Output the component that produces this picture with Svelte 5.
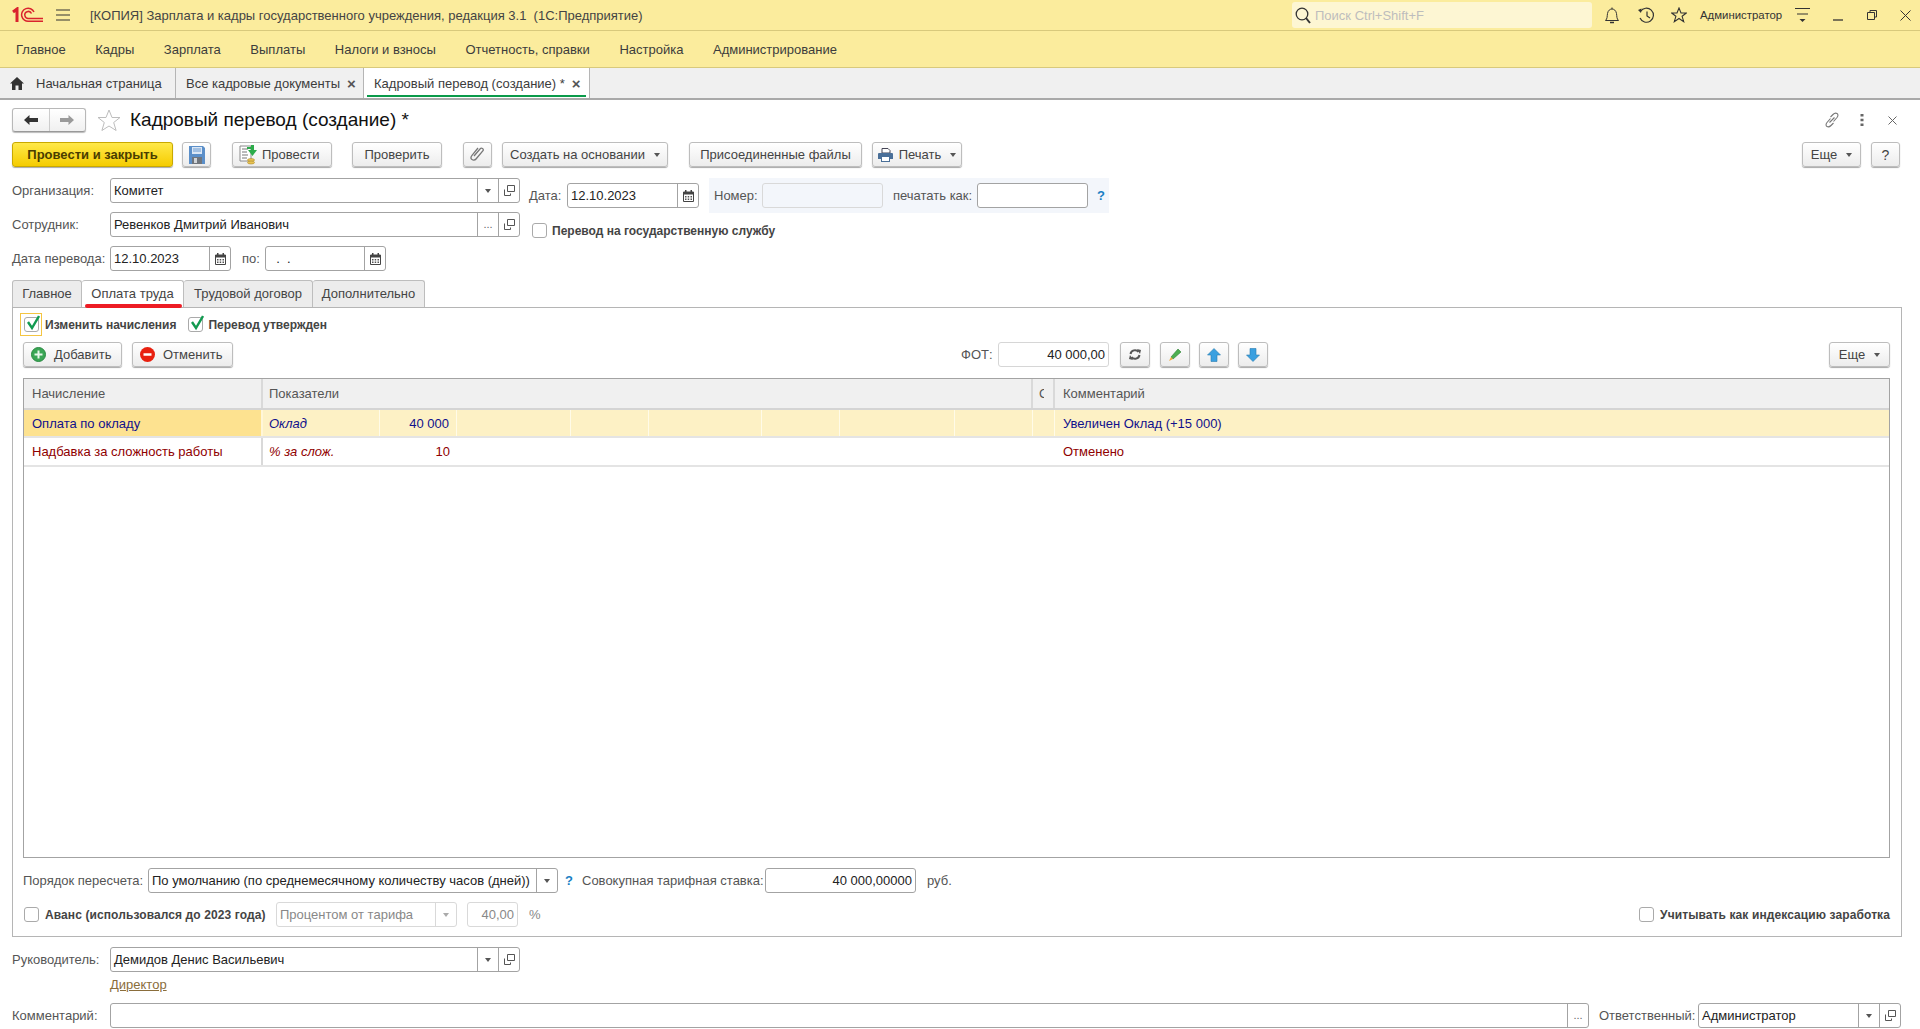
<script>
  const menu = ["Главное", "Кадры", "Зарплата", "Выплаты", "Налоги и взносы", "Отчетность, справки", "Настройка", "Администрирование"];
  const cells = [114, 78, 113, 78, 115, 78, 22];
</script>

{#snippet openIcon()}
  <svg width="11" height="11" viewBox="0 0 11 11" fill="none" stroke="#555"><path d="M3.5 .5h7v6h-7zM.5 4.5v6h6v-2" /></svg>
{/snippet}
{#snippet calIcon()}
  <svg width="11" height="12" viewBox="0 0 11 12"><path d="M.5 2h10v9.5H.5z" fill="#fff" stroke="#444" /><path d="M.5 2h10v2.5H.5zM2 0h1.500v2H2zM7.500 0H9v2H7.500z" fill="#444" /><path d="M2 6h1.500v1.500H2zM4.700 6h1.500v1.500H4.700zM7.500 6H9v1.500H7.500zM2 8.500h1.500V10H2zM4.700 8.500h1.500V10H4.700zM7.500 8.500H9V10H7.500z" fill="#555" /></svg>
{/snippet}
{#snippet tri()}
  <i class="tri"></i>
{/snippet}
{#snippet check(on)}
  <span class="cb">
    {#if on}
      <svg class="tick" width="16" height="18" viewBox="0 0 16 18" fill="none"><path d="M4 9l4 6 7-12" stroke="#129a50" stroke-width="2.400" /></svg>
    {/if}
  </span>
{/snippet}

<div class="app">
  <header class="titlebar">
    <svg class="logo" width="32" height="16" viewBox="0 0 32 16" fill="none" stroke="#d9232e">
      <path d="M1 5l4-3v13" stroke-width="3" />
      <path d="M22 5A6.500 6.500 0 1 0 17 14.200H31" stroke-width="1.500" />
      <path d="M19.500 6.500A3.500 3.500 0 1 0 17 11.400H31" stroke-width="1.500" />
    </svg>
    <svg class="burger" width="14" height="12" viewBox="0 0 14 12" stroke="#333"><path d="M0 1h14M0 6h14M0 11h14" /></svg>
    <div class="apptitle">[КОПИЯ] Зарплата и кадры государственного учреждения, редакция 3.1&nbsp; (1С:Предприятие)</div>
    <div class="search">
      <svg width="16" height="17" viewBox="0 0 16 17" fill="none" stroke="#333"><circle cx="7" cy="7" r="5.800" stroke-width="1.300" /><path d="M11 11l4 5" stroke-width="2" /></svg>
      <span>Поиск Ctrl+Shift+F</span>
    </div>
    <svg class="t-bell" width="16" height="17" viewBox="0 0 16 17" fill="none" stroke="#333"><path d="M1.500 13.500c2-2 1.500-4 2-7C4 3.500 6 2 8 2s4 1.500 4.500 4.500c.5 3 0 5 2 7zM8 .5V2" /><path d="M6 15.500h4" stroke-width="1.500" /></svg>
    <svg class="t-hist" width="18" height="17" viewBox="0 0 18 17" fill="none" stroke="#333"><path d="M3.500 4.500A7 7 0 1 1 3 11" stroke-width="1.200" /><path d="M1 3l3.500-1.500L4 6z" fill="#333" stroke="none" /><path d="M10 4.500V9l3 2" stroke-width="1.200" /></svg>
    <svg class="t-star" width="16" height="16" viewBox="0 0 16 16" fill="none" stroke="#333" stroke-width="1.100"><path d="M8 1l2 5h5.300l-4.200 3.300 1.600 5.400L8 11.500l-4.700 3.200 1.600-5.400L.7 6H6z" /></svg>
    <span class="user">Администратор</span>
    <svg class="t-lines" width="16" height="16" viewBox="0 0 16 16" stroke="#333"><path d="M0 1.500h15M2 7h11" /><path d="M4.500 12h6L7.500 15z" fill="#333" stroke="none" /></svg>
    <svg class="t-min" width="10" height="12" viewBox="0 0 10 12" stroke="#333"><path d="M0 11h10" stroke-width="1.300" /></svg>
    <svg class="t-max" width="10" height="10" viewBox="0 0 10 10" fill="none" stroke="#333"><path d="M3 2.500V.5h6.500v6.500H7.500M.5 2.500h7v7h-7z" /></svg>
    <svg class="t-close" width="11" height="11" viewBox="0 0 11 11" stroke="#333"><path d="M.5.5l10 10M10.500.5l-10 10" /></svg>
  </header>

  <nav class="menubar">
    {#each menu as m}<span>{m}</span>{/each}
  </nav>

  <div class="tabsbar">
    <div class="wtab home">
      <svg width="14" height="13" viewBox="0 0 14 13" fill="#333"><path d="M7 0L0 6.500h2V13h3.500V8.500h3V13H12V6.500h2z" /></svg>
      <span>Начальная страница</span>
    </div>
    <div class="wtab docs"><span>Все кадровые документы</span><b>×</b></div>
    <div class="wtab active"><span>Кадровый перевод (создание) *</span><b>×</b></div>
  </div>

  <main class="form">
    <div class="headline">
      <div class="navbtns">
        <span><svg width="14" height="10" viewBox="0 0 14 10" fill="#333"><path d="M0 5l5.500-5v3H14v4H5.500v3z" /></svg></span>
        <span><svg width="14" height="10" viewBox="0 0 14 10" fill="#9a9a9a"><path d="M14 5L8.500 0v3H0v4h8.500v3z" /></svg></span>
      </div>
      <svg class="bigstar" width="24" height="22" viewBox="0 0 24 22" fill="#fff" stroke="#bdbdbd"><path d="M12 1l3 7.500h8l-6.300 5 2.400 8L12 17l-7.100 4.500 2.400-8-6.300-5h8z" /></svg>
      <h1>Кадровый перевод (создание) *</h1>
      <div class="headright">
        <svg width="16" height="16" viewBox="0 0 16 16" fill="none" stroke="#777" stroke-width="1.100"><path d="M6.500 6.500L3 10.500c-1.500 1.800-1 3.500 0 4s2.500 .5 4-1L9.500 11M9.500 9.500l3.500-4c1.500-1.800 1-3.500 0-4s-2.500-.5-4 1L6.500 5M5.500 10.500l5-5" /></svg>
        <svg class="dots" width="4" height="12" viewBox="0 0 4 12" fill="#666"><path d="M.500 0h3v2.400h-3zM.500 4.800h3v2.400h-3zM.500 9.600h3V12h-3z" /></svg>
        <svg class="xx" width="9" height="9" viewBox="0 0 9 9" stroke="#666"><path d="M.500.500l8 8M8.500.500l-8 8" /></svg>
      </div>
    </div>

    <div class="toolbar">
      <button class="btn primary b-close">Провести и закрыть</button>
      <button class="btn b-ico g9">
        <svg width="16" height="18" viewBox="0 0 16 18"><path d="M0 0h14l2 2v16H0z" fill="#5b8fc9" /><path d="M3 1h10v7H3z" fill="#dbe7f5" /><path d="M4 3h8M4 5h8" stroke="#6a9ad0" /><path d="M3 11h10v7H3z" fill="#70757c" /><path d="M5 12h3v5H5z" fill="#d0d4d8" /></svg>
      </button>
      <button class="btn b-post g21">
        <svg width="20" height="20" viewBox="0 0 20 20"><path d="M1 1h11v15H1z" fill="#fff" stroke="#8a8a8a" /><path d="M3 4h6M3 7h5M3 10h6M3 13h5" stroke="#777" /><ellipse cx="12" cy="15" rx="3.500" ry="1.500" fill="#e8c252" stroke="#a98a2c" stroke-width=".6" /><ellipse cx="12" cy="17.500" rx="3.500" ry="1.500" fill="#e8c252" stroke="#a98a2c" stroke-width=".6" /><path d="M8 2h4V0h3v2h0v3h3l-4.500 6L9 5h3V4H8z" fill="#2cab4a" /></svg>
        Провести
      </button>
      <button class="btn b-check g20">Проверить</button>
      <button class="btn b-ico g21">
        <svg width="15" height="17" viewBox="0 0 15 17" fill="none" stroke="#777" stroke-width="1.300"><path d="M4 10l6-7c1.500-1.800 4-.2 3 1.700L6 13c-1 1.300-3.500 1.500-4.500 .2S1 10.500 2 9.300L8 2" /></svg>
      </button>
      <button class="btn b-create g10">Создать на основании {@render tri()}</button>
      <button class="btn b-files g21">Присоединенные файлы</button>
      <button class="btn b-print g10">
        <svg width="15" height="14" viewBox="0 0 15 14"><path d="M4 .5h6l2 2V5H4z" fill="#fff" stroke="#445" /><path d="M1 5h13a1 1 0 0 1 1 1v5h-3v3H3v-3H0V6a1 1 0 0 1 1-1z" fill="#4a6f98" /><path d="M4 9h7v4H4z" fill="#fff" /></svg>
        Печать {@render tri()}
      </button>
      <button class="btn b-more push">Еще {@render tri()}</button>
      <button class="btn b-ico g10">?</button>
    </div>

    <div class="heads">
      <div class="leftcol">
        <div class="row">
          <span class="lbl l98">Организация:</span>
          <div class="field f-ref"><span class="val">Комитет</span><span class="act">{@render tri()}</span><span class="act">{@render openIcon()}</span></div>
        </div>
        <div class="row">
          <span class="lbl l98">Сотрудник:</span>
          <div class="field f-ref"><span class="val">Ревенков Дмитрий Иванович</span><span class="act dd">...</span><span class="act">{@render openIcon()}</span></div>
        </div>
        <div class="row">
          <span class="lbl l98">Дата перевода:</span>
          <div class="field f-date"><span class="val">12.10.2023</span><span class="act">{@render calIcon()}</span></div>
          <span class="lbl po">по:</span>
          <div class="field f-date"><span class="val">&nbsp;&nbsp;.&nbsp;&nbsp;.</span><span class="act">{@render calIcon()}</span></div>
        </div>
      </div>
      <div class="rightcol">
        <div class="daterow">
          <span class="lbl l38">Дата:</span>
          <div class="field f-date2"><span class="val">12.10.2023</span><span class="act">{@render calIcon()}</span></div>
          <div class="numbox">
            <span class="lbl l48">Номер:</span>
            <div class="field f-num disabled"></div>
            <span class="lbl l84">печатать как:</span>
            <div class="field f-as"></div>
            <span class="hint q1">?</span>
          </div>
        </div>
        <label class="chk state">{@render check(false)}<b>Перевод на государственную службу</b></label>
      </div>
    </div>

    <div class="tabs">
      <div class="tab t1">Главное</div>
      <div class="tab t2 on">Оплата труда<i class="redline"></i></div>
      <div class="tab t3">Трудовой договор</div>
      <div class="tab t4">Дополнительно</div>
    </div>

    <section class="panel">
      <div class="checks">
        <span class="focus">{@render check(true)}</span><b class="cl1">Изменить начисления</b>
        <span class="c2">{@render check(true)}</span><b class="cl2">Перевод утвержден</b>
      </div>

      <div class="tablebar">
        <button class="btn b-add">
          <svg width="15" height="15" viewBox="0 0 15 15"><circle cx="7.500" cy="7.500" r="7" fill="#3aa655" stroke="#2a8a42" /><path d="M3.500 7.500h8M7.500 3.500v8" stroke="#e8f7ec" stroke-width="2" /></svg>
          Добавить
        </button>
        <button class="btn b-cancel g10">
          <svg width="15" height="15" viewBox="0 0 15 15"><circle cx="7.500" cy="7.500" r="7.500" fill="#e8200f" /><path d="M3.500 7.500h8" stroke="#fff" stroke-width="2.500" /></svg>
          Отменить
        </button>
        <span class="lbl fot">ФОТ:</span>
        <div class="field f-fot soft"><span class="val right">40 000,00</span></div>
        <button class="btn b-sq g11">
          <svg width="12" height="11" viewBox="0 0 12 11" fill="none" stroke="#555" stroke-width="2"><path d="M1.500 5A4.500 4.500 0 0 1 9.500 3M10.500 6A4.500 4.500 0 0 1 2.500 8" /><path d="M8 0l4 1-1 4zM4 11L0 10l1-4z" fill="#555" stroke="none" /></svg>
        </button>
        <button class="btn b-sq g10">
          <svg width="14" height="14" viewBox="0 0 14 14"><path d="M3 9l7-8 3 3-8 7z" fill="#4caf50" stroke="#2d7d32" stroke-width=".6" /><path d="M1 13l2-4 2 2z" fill="#f0a83a" /></svg>
        </button>
        <button class="btn b-sq g9">
          <svg width="14" height="14" viewBox="0 0 14 14"><path d="M7 .5L13.500 7H10v6.500H4V7H.5z" fill="#3aa0e0" stroke="#2a7cb0" stroke-width=".6" /></svg>
        </button>
        <button class="btn b-sq g9">
          <svg width="14" height="14" viewBox="0 0 14 14"><path d="M7 13.500L13.500 7H10V.5H4V7H.5z" fill="#3aa0e0" stroke="#2a7cb0" stroke-width=".6" /></svg>
        </button>
        <button class="btn b-more2 push">Еще {@render tri()}</button>
      </div>

      <div class="grid">
        <div class="thead">
          <div class="th col1">Начисление</div>
          <div class="th col2">Показатели</div>
          <div class="th col3"><span class="clip">С</span></div>
          <div class="th col4">Комментарий</div>
        </div>
        <div class="tr sel">
          <div class="td col1 cur">Оплата по окладу</div>
          <div class="td c-name">Оклад</div>
          <div class="td num">40 000</div>
          {#each cells as w}<div class="td blank" style="width:{w}px"></div>{/each}
          <div class="td col4">Увеличен Оклад (+15 000)</div>
        </div>
        <div class="tr red">
          <div class="td col1">Надбавка за сложность работы</div>
          <div class="td c-name">% за слож.</div>
          <div class="td num">10</div>
          {#each cells as w}<div class="td blank" style="width:{w}px"></div>{/each}
          <div class="td col4">Отменено</div>
        </div>
      </div>

      <div class="row r-calc">
        <span class="lbl l125">Порядок пересчета:</span>
        <div class="field f-calc"><span class="val">По умолчанию (по среднемесячному количеству часов (дней))</span><span class="act">{@render tri()}</span></div>
        <span class="hint q2">?</span>
        <span class="lbl l183">Совокупная тарифная ставка:</span>
        <div class="field f-rate"><span class="val right">40 000,00000</span></div>
        <span class="lbl rub">руб.</span>
      </div>

      <div class="row r-adv">
        <label class="chk adv">{@render check(false)}<b>Аванс (использовался до 2023 года)</b></label>
        <div class="field f-pct disabled"><span class="val">Процентом от тарифа</span><span class="act">{@render tri()}</span></div>
        <div class="field f-40 disabled"><span class="val right">40,00</span></div>
        <span class="lbl pct">%</span>
        <label class="chk push idx">{@render check(false)}<b>Учитывать как индексацию заработка</b></label>
      </div>
    </section>

    <div class="row r-head">
      <span class="lbl l98">Руководитель:</span>
      <div class="field f-ref"><span class="val">Демидов Денис Васильевич</span><span class="act">{@render tri()}</span><span class="act">{@render openIcon()}</span></div>
    </div>
    <a class="director" href="#director">Директор</a>
    <div class="row r-comment">
      <span class="lbl l98">Комментарий:</span>
      <div class="field f-comment"><span class="val"></span><span class="act dd">...</span></div>
      <span class="lbl l99">Ответственный:</span>
      <div class="field f-resp"><span class="val">Администратор</span><span class="act">{@render tri()}</span><span class="act">{@render openIcon()}</span></div>
    </div>
  </main>
</div>

<style>
  :global(body) {
    margin: 0;
    background: #fff;
    font: 13px "Liberation Sans", Arial, sans-serif;
    color: #333;
  }
  .app {
    width: 1920px;
    height: 1029px;
    overflow: hidden;
    display: flex;
    flex-direction: column;
  }
  .titlebar {
    height: 30px;
    flex: none;
    display: flex;
    align-items: center;
    background: #fbec9d;
    border-bottom: 1px solid #d8c97c;
    color: #444;
  }
  .logo { margin-left: 12px; }
  .burger { margin-left: 12px; }
  .apptitle { margin-left: 20px; }
  .search {
    margin-left: auto;
    width: 300px;
    height: 26px;
    box-sizing: border-box;
    display: flex;
    align-items: center;
    gap: 4px;
    padding-left: 3px;
    background: #fdf6d3;
    border-radius: 3px;
    color: #bdbdbd;
  }
  .t-bell { margin-left: 12px; }
  .t-hist { margin-left: 17px; }
  .t-star { margin-left: 16px; }
  .user { margin-left: 13px; font-size: 11.4px; width: 84px; color: #333; white-space: nowrap; }
  .t-lines { margin-left: 11px; }
  .t-min { margin-left: 22px; }
  .t-max { margin-left: 24px; }
  .t-close { margin-left: 23px; margin-right: 9px; }

  .menubar {
    height: 36px;
    flex: none;
    display: flex;
    align-items: center;
    gap: 29.6px;
    padding-left: 16px;
    background: #fbec9d;
    border-bottom: 1px solid #d8c97c;
    color: #3c3c3c;
  }

  .tabsbar {
    height: 32px;
    box-sizing: border-box;
    flex: none;
    display: flex;
    background: #f0f0f0;
    border-bottom: 2px solid #a9a9a9;
  }
  .wtab {
    box-sizing: border-box;
    position: relative;
    display: flex;
    align-items: center;
    border-right: 1px solid #b5b5b5;
    color: #3c3c3c;
  }
  .wtab b { color: #555; font-size: 15px; }
  .home { width: 176px; padding-left: 10px; gap: 12px; }
  .docs { width: 188px; padding-left: 10px; }
  .docs b { margin-left: 7px; }
  .active { width: 226px; padding-left: 10px; background: #fff; }
  .active b { margin-left: 7px; }
  .active::after {
    content: "";
    position: absolute;
    left: 3px;
    right: 3px;
    bottom: 1px;
    height: 2px;
    background: #0a9a4a;
  }

  .form {
    flex: 1;
    min-height: 0;
    padding: 8px 18px 0 12px;
    display: flex;
    flex-direction: column;
  }
  .headline {
    height: 24px;
    flex: none;
    display: flex;
    align-items: center;
  }
  .navbtns {
    width: 74px;
    height: 24px;
    box-sizing: border-box;
    display: flex;
    border: 1px solid #b8b8b8;
    border-bottom-color: #999;
    border-radius: 3px;
    background: linear-gradient(#fff, #f0f0f0);
    box-shadow: 0 1px 1px #bbb;
  }
  .navbtns span {
    flex: 1;
    display: flex;
    align-items: center;
    justify-content: center;
  }
  .navbtns span + span { border-left: 1px solid #ccc; }
  .bigstar { margin-left: 11px; }
  h1 {
    margin: 0 0 0 9px;
    font-size: 19px;
    font-weight: normal;
    color: #111;
  }
  .headright {
    margin-left: auto;
    display: flex;
    align-items: center;
    margin-right: 5px;
  }
  .dots { margin-left: 20px; }
  .xx { margin-left: 24px; }

  .toolbar {
    margin-top: 10px;
    height: 26px;
    flex: none;
    display: flex;
    align-items: flex-start;
    margin-right: 2px;
  }
  .btn {
    height: 25px;
    box-sizing: border-box;
    padding: 0;
    display: flex;
    align-items: center;
    justify-content: center;
    gap: 6px;
    font: inherit;
    color: #444;
    background: linear-gradient(#fff, #ececec);
    border: 1px solid #bdbdbd;
    border-radius: 3px;
    box-shadow: 0 1px 1px #a8a8a8;
  }
  .primary {
    background: linear-gradient(#ffe94a, #f5cc00);
    border-color: #c9a900;
    font-weight: bold;
    color: #4a3d00;
  }
  .g9 { margin-left: 9px; }
  .g10 { margin-left: 10px; }
  .g11 { margin-left: 11px; }
  .g20 { margin-left: 20px; }
  .g21 { margin-left: 21px; }
  .push { margin-left: auto; }
  .b-close { width: 161px; }
  .b-ico { width: 29px; font-size: 14px; }
  .b-post { width: 100px; justify-content: flex-start; padding-left: 6px; gap: 3px; }
  .b-check { width: 90px; }
  .b-create { width: 166px; }
  .b-files { width: 173px; }
  .b-print { width: 90px; }
  .b-more { width: 59px; }
  .b-more2 { width: 61px; }
  .b-add { width: 99px; justify-content: flex-start; padding-left: 7px; gap: 8px; }
  .b-cancel { width: 101px; justify-content: flex-start; padding-left: 7px; gap: 8px; }
  .b-sq { width: 30px; }
  .tri {
    display: inline-block;
    width: 0;
    height: 0;
    margin-left: 3px;
    border: 3px solid transparent;
    border-top: 4px solid #555;
    border-bottom: 0;
  }
  .act .tri { margin-left: 0; }

  .heads {
    margin-top: 10px;
    display: flex;
    flex: none;
  }
  .leftcol {
    width: 508px;
    display: flex;
    flex-direction: column;
    gap: 9px;
  }
  .rightcol {
    margin-left: 9px;
    display: flex;
    flex-direction: column;
  }
  .row {
    display: flex;
    align-items: center;
    flex: none;
  }
  .lbl { flex: none; color: #555; white-space: nowrap; }
  .l98 { width: 98px; }
  .l38 { width: 38px; }
  .l48 { width: 48px; }
  .l84 { width: 84px; }
  .l125 { width: 125px; }
  .l183 { width: 183px; }
  .l99 { width: 99px; margin-left: 10px; }
  .po { width: 23px; margin-left: 11px; }
  .field {
    height: 25px;
    box-sizing: border-box;
    flex: none;
    display: flex;
    align-items: stretch;
    background: #fff;
    border: 1px solid #a3a3a3;
    border-radius: 3px;
    overflow: hidden;
  }
  .soft { border-color: #d6d6d6; }
  .val {
    flex: 1;
    min-width: 0;
    padding: 0 3px;
    display: flex;
    align-items: center;
    white-space: nowrap;
    color: #222;
  }
  .right { justify-content: flex-end; padding-right: 3px; }
  .act {
    flex: none;
    width: 20px;
    display: flex;
    align-items: center;
    justify-content: center;
    border-left: 1px solid #a3a3a3;
    color: #666;
  }
  .dd { align-items: flex-end; padding-bottom: 6px; box-sizing: content-box; line-height: 1; font-size: 11px; }
  .f-ref { width: 410px; }
  .f-date { width: 121px; }
  .f-date2 { width: 132px; }
  .f-num { width: 121px; margin-right: 10px; background: #f3f6fb; }
  .f-as { width: 111px; }
  .f-fot { width: 111px; }
  .f-calc { width: 410px; }
  .f-rate { width: 151px; }
  .f-pct { width: 181px; }
  .f-40 { width: 51px; margin-left: 10px; }
  .f-comment { width: 1479px; }
  .f-resp { width: 203px; }
  .disabled { border-color: #d9d9d9; }
  .disabled .val { color: #888; }
  .disabled .act { border-left-color: #d9d9d9; }
  .disabled .tri { border-top-color: #aaa; }
  .daterow {
    height: 35px;
    display: flex;
    align-items: center;
  }
  .numbox {
    margin-left: 10px;
    height: 35px;
    width: 400px;
    box-sizing: border-box;
    padding-left: 5px;
    display: flex;
    align-items: center;
    background: #f3f6fb;
  }
  .hint { color: #1a7fc4; font-weight: bold; font-size: 13px; }
  .q1 { margin-left: 9px; }
  .q2 { margin-left: 7px; width: 17px; }
  .chk {
    display: flex;
    align-items: center;
    gap: 6px;
    flex: none;
  }
  .chk b, .checks b { font-size: 12px; color: #444; white-space: nowrap; }
  .state { margin: 10px 0 0 3px; gap: 5px; }
  .adv b, .idx b { letter-spacing: .1px; }
  .cb {
    position: relative;
    display: block;
    flex: none;
    width: 15px;
    height: 15px;
    box-sizing: border-box;
    background: #fff;
    border: 1px solid #aaa;
    border-radius: 3px;
  }
  .tick { position: absolute; left: -1px; top: -5px; }

  .tabs {
    margin-top: 9px;
    height: 27px;
    flex: none;
    display: flex;
  }
  .tab {
    position: relative;
    box-sizing: border-box;
    display: flex;
    align-items: center;
    justify-content: center;
    padding-bottom: 2px;
    background: #ececec;
    border: 1px solid #bdbdbd;
    border-left: 0;
    border-bottom: 0;
    border-radius: 3px 3px 0 0;
    color: #444;
  }
  .t1 { width: 70px; border-left: 1px solid #bdbdbd; }
  .t2 { width: 102px; }
  .t3 { width: 129px; }
  .t4 { width: 112px; }
  .on { background: #fff; }
  .redline {
    position: absolute;
    left: 3px;
    right: 1px;
    bottom: -1px;
    height: 4px;
    border-radius: 2px;
    background: #ed1c24;
    z-index: 1;
  }

  .panel {
    width: 1890px;
    height: 630px;
    flex: none;
    box-sizing: border-box;
    padding: 5px 11px 0 10px;
    border: 1px solid #b5b5b5;
    display: flex;
    flex-direction: column;
  }
  .checks {
    height: 23px;
    flex: none;
    display: flex;
    align-items: center;
  }
  .focus {
    margin-left: -3px;
    width: 22px;
    height: 23px;
    box-sizing: border-box;
    padding: 3px;
    border: 1px solid #f4c542;
  }
  .cl1 { margin-left: 3px; }
  .c2 { margin-left: 12px; }
  .cl2 { margin-left: 5px; }
  .tablebar {
    margin-top: 6px;
    height: 26px;
    flex: none;
    display: flex;
    align-items: flex-start;
  }
  .fot { margin-left: 728px; width: 37px; line-height: 25px; }
  .grid {
    margin-top: 10px;
    height: 480px;
    flex: none;
    box-sizing: border-box;
    border: 1px solid #a3a3a3;
    display: flex;
    flex-direction: column;
  }
  .thead {
    height: 31px;
    box-sizing: border-box;
    flex: none;
    display: flex;
    background: #f0f0f0;
    border-bottom: 2px solid #d4d4d4;
    color: #555;
  }
  .th {
    box-sizing: border-box;
    display: flex;
    align-items: center;
    padding-left: 8px;
    overflow: hidden;
  }
  .clip { display: block; width: 5px; overflow: hidden; }
  .col1 { width: 239px; flex: none; box-sizing: border-box; border-right: 2px solid #d9d9d9; }
  .col2 { width: 770px; padding-left: 6px; border-right: 2px solid #d9d9d9; }
  .col3 { width: 22px; padding-left: 6px; border-right: 2px solid #d9d9d9; }
  .col4 { flex: 1; }
  .tr {
    height: 28px;
    box-sizing: border-box;
    flex: none;
    display: flex;
    border-bottom: 2px solid #e4e4e4;
  }
  .tr + .tr { height: 29px; }
  .td {
    box-sizing: border-box;
    display: flex;
    align-items: center;
    padding-left: 8px;
    flex: none;
    white-space: nowrap;
  }
  .td.col4 { flex: 1; }
  .sel { background: #fdf1c5; color: #10108c; }
  .sel .td:not(.col1) { border-right: 1px solid #fffbe8; }
  .sel .td.col4 { border-right: 0; }
  .sel .cur { background: #fde290; border-right-color: #fff6d8; }
  .red { color: #8f0000; }
  .c-name { width: 117px; font-style: italic; padding-left: 6px; }
  .num { width: 77px; justify-content: flex-end; padding-right: 7px; }
  .blank { padding: 0; }

  .r-calc { margin-top: 10px; }
  .rub { margin-left: 11px; }
  .r-adv { margin-top: 9px; }
  .adv { width: 252px; margin-left: 1px; }
  .pct { margin-left: 11px; color: #888; }
  .push.idx { margin-left: auto; }

  .r-head { margin-top: 10px; }
  .director {
    margin: 5px 0 0 98px;
    height: 15px;
    line-height: 15px;
    color: #8a6d3b;
    text-decoration: underline;
    flex: none;
    align-self: flex-start;
  }
  .r-comment { margin-top: 11px; }
</style>
